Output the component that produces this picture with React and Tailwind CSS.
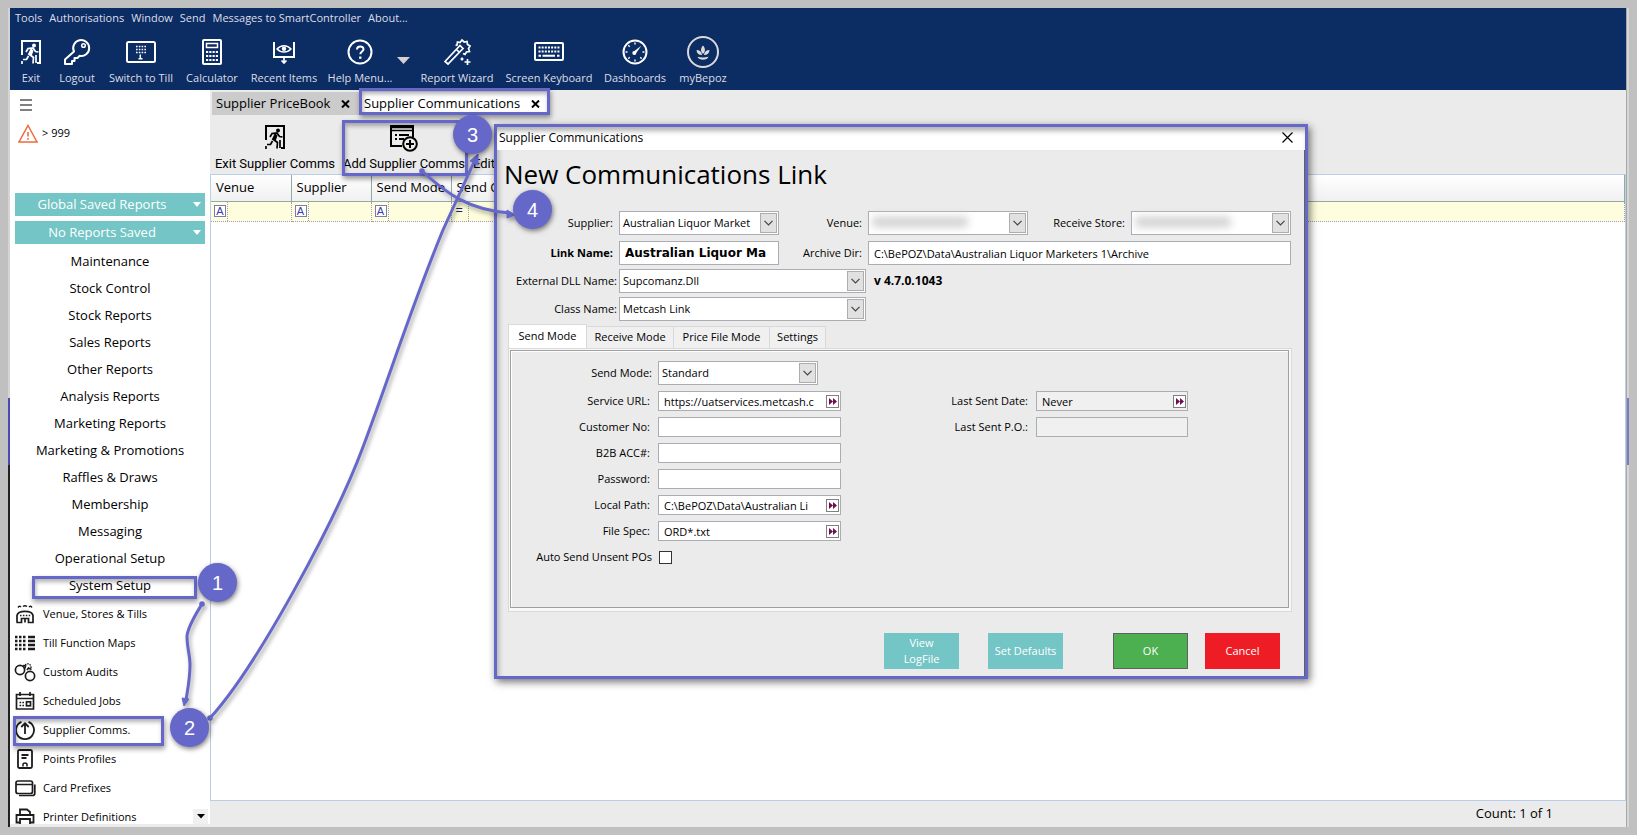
import React from "react";

const UI = "font-['Open_Sans','Noto_Sans',sans-serif]";

function Svg({ w = 26, h = 26, box = "0 0 26 26", sw = 2, children }) {
  return (
    <svg width={w} height={h} viewBox={box} fill="none" stroke="currentColor" strokeWidth={sw} aria-hidden="true" className="shrink-0">
      {children}
    </svg>
  );
}

const ExitIcon = () => (
  <Svg w={22} h={26} box="0 0 22 26">
    <path d="M2 16V2h18v22h-3" />
    <circle cx="14" cy="6.500" r="2" fill="currentColor" stroke="none" />
    <path d="M12 9l-3.500 7M6 13l2-3.500 5-.5 2.500 3.500 3 .5M9.500 15.500l4 3-.5 6M8.500 17l-2 3.500H3M2 22v3M16 16v8" strokeWidth="1.700" />
    <path d="M11.500 10l-2.500 6 2.500 1.500 2-6z" fill="currentColor" stroke="none" />
  </Svg>
);
const KeyIcon = () => (
  <Svg w={28} h={28} box="0 0 28 28">
    <path d="M11 13.500a8 8 0 1 1 5.500 4.300l-2 2.200h-3v3H9v3H2v-4.500z" strokeLinejoin="round" />
    <circle cx="20.500" cy="7.500" r="1.800" strokeWidth="1.500" />
  </Svg>
);
const TillIcon = () => (
  <Svg w={30} h={22} box="0 0 30 22">
    <rect x="1" y="1" width="28" height="20" rx="1.500" />
    <path d="M10 5.500h10M10 8.500h10M10 11.500h10" strokeDasharray="1.600 1.200" strokeWidth="1.600" />
    <path d="M14.300 13.500v4M12.500 17.800h4" strokeWidth="1.500" />
  </Svg>
);
const CalcIcon = () => (
  <Svg w={22} h={26} box="0 0 22 26">
    <rect x="2" y="1" width="18" height="24" rx="1" />
    <rect x="5.500" y="4.500" width="11" height="4" strokeWidth="1.500" />
    <path d="M5 13h12M5 17h12M5 21h12" strokeDasharray="2.200 1.070" />
  </Svg>
);
const RecentIcon = () => (
  <Svg w={24} h={24} box="0 0 24 24">
    <path d="M2 2v15h20V2" />
    <path d="M5 9c4-4.500 10-4.500 14 0-4 4-10 4-14 0z" strokeWidth="1.500" />
    <circle cx="12" cy="8.800" r="2.200" fill="currentColor" stroke="none" />
    <path d="M12 17v6M9.500 20.500L12 23l2.500-2.500" strokeWidth="1.700" />
  </Svg>
);
const HelpIcon = () => (
  <Svg>
    <circle cx="13" cy="13" r="11.500" />
    <path d="M10 10.500c0-4 6.500-4 6.500-.3 0 2.300-3.200 2.300-3.200 5" />
    <path d="M13.300 17.500v2.300" strokeWidth="2.300" />
  </Svg>
);
const WandIcon = () => (
  <Svg w={28} h={28} box="0 0 28 28" sw={1.7}>
    <path d="M2 23.500L17 7.500l3 3L5 26z M13.500 11.500l3 3" />
    <path d="M12.500 7.500l1.500-.5.500-3 2.500.5 2-2.500 2.200 2 2.800-.5.500 3 2.500 1.500-1.500 2.500 1 3-3 .5-1.500 2.500-2-1" />
    <path d="M19 19.500v3M17.500 21h3M24.500 21v6M21.500 24h6" />
  </Svg>
);
const KeyboardIcon = () => (
  <Svg w={30} h={20} box="0 0 30 20">
    <rect x="1" y="1" width="28" height="17" rx="1" />
    <path d="M4.500 5.500h21M4.500 9.500h21" strokeDasharray="2 1.160" />
    <path d="M4.500 13.700h2.500M8.500 13.700h12.500M23 13.700h2.500" />
  </Svg>
);
const DashIcon = () => (
  <Svg>
    <circle cx="13" cy="13" r="11.500" />
    <path d="M13 3.500v2M13 20.500v2M3.500 13h2M20.500 13h2M6.300 6.300l1.400 1.400M6.300 19.700l1.400-1.400M19.700 19.700l-1.400-1.400" strokeWidth="1.400" />
    <path d="M10.800 13.200l8.500-6.500-6.200 8.800z" fill="currentColor" stroke="none" />
    <circle cx="12.300" cy="14" r="2" fill="currentColor" stroke="none" />
  </Svg>
);
const BepozIcon = () => (
  <Svg w={32} h={32} box="0 0 32 32">
    <g stroke="#dcdad8">
      <circle cx="16" cy="16" r="15" />
      <path d="M16 9.500c2.600 3 2.600 6 0 8.500-2.600-2.500-2.600-5.500 0-8.500zM9.500 14c3.200 0 5 1.700 5.600 5-3.600 0-5.400-1.800-5.600-5zM22.500 14c-3.200 0-5 1.700-5.600 5 3.600 0 5.400-1.800 5.600-5zM10.500 20.800c3.600.8 7.400.8 11 0-1 4-10 4-11 0z" fill="#dcdad8" stroke="none" />
    </g>
  </Svg>
);
const AddIcon = () => (
  <Svg w={30} h={28} box="0 0 30 28">
    <path d="M13 22H2V2h22v11" />
    <path d="M2 3.500h22M2 6.500h22" strokeWidth="1.500" />
    <path d="M6 11h2M6 15h2M10 11h10M10 15h5" strokeWidth="1.800" />
    <circle cx="21" cy="20" r="6.800" fill="#ebebeb" />
    <path d="M21 16v8M17 20h8" />
  </Svg>
);

const VenueIcon = () => (
  <Svg w={20} h={20} box="0 0 20 20" sw={1.7}>
    <path d="M2 18.500v-7c1-5.500 15-5.500 16 0v7h-4.500v-4h-7v4H1.500M10 14.500v4" />
    <path d="M5 11.500h10.500" strokeDasharray="1.500 1.400" />
    <path d="M3 3.500c1-1.500 2-1.500 3-.5M8 2.500c1.300-1 2.700-1 4 0M14 3c1-1 2-1 3 .5" strokeWidth="1.400" />
  </Svg>
);
const MapIcon = () => (
  <Svg w={20} h={20} box="0 0 20 20" sw={2.5}>
    <path d="M0 4h12M0 8h12M0 12h12M0 16h12" strokeDasharray="2.500 1.500" />
    <path d="M13 4h7M13 8h7M13 12h7M13 16h7" />
  </Svg>
);
const AuditIcon = () => (
  <Svg w={22} h={20} box="0 0 22 20" sw={1.7}>
    <circle cx="6" cy="8" r="4.600" />
    <circle cx="16" cy="14" r="4.600" />
    <path d="M9 3.500l2.500.5-1 3M13 8l1.500-2 3 1.500" />
    <path d="M11 3c3-2.500 6-1 6 3" strokeWidth="1.300" strokeDasharray="1.500 1" />
  </Svg>
);
const JobsIcon = () => (
  <Svg w={20} h={20} box="0 0 20 20" sw={1.7}>
    <path d="M1.500 3.500h17v14.500h-17zM1.500 7.500h17M5 1v4M15 1v4" />
    <path d="M4.500 11.500h4.500M4.500 14.500h4.500" strokeDasharray="1.700 1.200" />
    <rect x="11.500" y="10.800" width="4" height="4" />
  </Svg>
);
const CommsIcon = () => (
  <Svg w={20} h={20} box="0 0 20 20" sw={1.8}>
    <path d="M6.500 1.800a9 9 0 1 0 7 0" />
    <path d="M10 14V3.500M6.300 7L10 3.200 13.700 7" />
  </Svg>
);
const PointsIcon = () => (
  <Svg w={20} h={20} box="0 0 20 20" sw={1.8}>
    <rect x="3" y="1" width="14" height="18" rx="1.500" />
    <path d="M6.500 6h7M6.500 9h5" />
    <path d="M8 17.500v-2c0-2 4-2 4 0v2" strokeWidth="1.500" />
  </Svg>
);
const CardIcon = () => (
  <Svg w={21} h={20} box="0 0 21 20" sw={1.7}>
    <rect x="1" y="3" width="16.500" height="12.500" rx="2" />
    <path d="M1 6.500h16.500M4 17.500h13.500c1.500 0 2.300-.8 2.300-2.300V6.500" />
  </Svg>
);
const PrinterIcon = () => (
  <Svg w={20} h={20} box="0 0 20 20" sw={1.8}>
    <path d="M5 8V2.500h7l3 2.500V8M5 15.500H1.500V8h17v7.500H15" />
    <path d="M5 12h10v6.500H5z" />
  </Svg>
);

const toolbar = [
  ["Exit", ExitIcon, "w-[34px]"],
  ["Logout", KeyIcon, "w-[58px]"],
  ["Switch to Till", TillIcon, "w-[70px]"],
  ["Calculator", CalcIcon, "w-[72px]"],
  ["Recent Items", RecentIcon, "w-[72px]"],
  ["Help Menu...", HelpIcon, "w-20"],
  null,
  ["Report Wizard", WandIcon, "w-[94px]"],
  ["Screen Keyboard", KeyboardIcon, "w-[90px]"],
  ["Dashboards", DashIcon, "w-[82px]"],
  ["myBepoz", BepozIcon, "w-[54px]"],
];

const groups = [
  "Maintenance", "Stock Control", "Stock Reports", "Sales Reports", "Other Reports", "Analysis Reports",
  "Marketing Reports", "Marketing & Promotions", "Raffles & Draws", "Membership", "Messaging",
  "Operational Setup", "System Setup",
];

const setup = [
  ["Venue, Stores & Tills", VenueIcon],
  ["Till Function Maps", MapIcon],
  ["Custom Audits", AuditIcon],
  ["Scheduled Jobs", JobsIcon],
  ["Supplier Comms.", CommsIcon],
  ["Points Profiles", PointsIcon],
  ["Card Prefixes", CardIcon],
  ["Printer Definitions", PrinterIcon],
];

function Header() {
  return (
    <header className="bg-[#0c2c64] text-[#dcdfe6]">
      <nav className="flex h-5 items-center gap-[7px] pl-[5px] text-[11px] leading-4">
        {["Tools", "Authorisations", "Window", "Send", "Messages to SmartController", "About..."].map((t) => (
          <button key={t} type="button" className="whitespace-nowrap">{t}</button>
        ))}
      </nav>
      <div className="flex h-[62px] pt-0.5 pl-1">
        {toolbar.map((item, i) => {
          if (!item) {
            return (
              <button key={i} type="button" aria-label="More help" className="-ml-1 flex w-3.5 justify-center pt-[27px]">
                <svg width="13" height="7" viewBox="0 0 13 7" fill="#d8d0d0"><path d="M0 0h13L6.500 7z" /></svg>
              </button>
            );
          }
          const [label, Icon, width] = item;
          return (
            <button key={label} type="button" className={`flex flex-col items-center ${width}`}>
              <span className="flex h-11 items-center text-white"><Icon /></span>
              <span className="-mt-[3px] whitespace-nowrap text-[11px] leading-[14px]">{label}</span>
            </button>
          );
        })}
      </div>
    </header>
  );
}

function ReportButton({ children }) {
  return (
    <button type="button" className="flex h-[23px] items-center bg-[#74c5c5] text-[13px] text-white">
      <span className="flex-1 pr-1">{children}</span>
      <svg width="8" height="5" viewBox="0 0 8 5" fill="#fff" className="mr-1"><path d="M0 0h8L4 5z" /></svg>
    </button>
  );
}

function Sidebar() {
  return (
    <aside className="flex h-[734px] w-[200px] shrink-0 flex-col overflow-hidden bg-white text-black">
      <button type="button" aria-label="Menu" className="mt-[9px] ml-2.5 flex w-3 flex-col gap-0.5 self-start">
        <span className="h-0.5 bg-[#808080]" />
        <span className="mt-px h-0.5 bg-[#808080]" />
        <span className="mt-px h-0.5 bg-[#808080]" />
      </button>
      <div className="mt-[13px] ml-2 flex h-6 items-center gap-1 text-[11px]">
        <svg width="20" height="19" viewBox="0 0 20 19" fill="none" stroke="#ee6a3c" strokeWidth="1.500" aria-hidden="true">
          <path d="M10 1.500L19 18H1z" />
          <path d="M10 8v4.500M10 14v1.800" strokeWidth="1.600" />
        </svg>
        <span>&gt; 999</span>
      </div>
      <div className="mt-[50px] flex flex-col gap-[5px] px-[5px]">
        <ReportButton>Global Saved Reports</ReportButton>
        <ReportButton>No Reports Saved</ReportButton>
      </div>
      <ul className="mt-1">
        {groups.map((g) => (
          <li key={g}>
            <button type="button" className="block h-[27px] w-full text-center text-[13px] leading-[27px]">{g}</button>
          </li>
        ))}
      </ul>
      <div className="flex items-end">
        <ul className="flex-1">
          {setup.map(([label, Icon]) => (
            <li key={label}>
              <button type="button" className="flex h-[29px] w-full items-center pl-1 text-left text-[11px]">
                <span className="flex w-[22px] justify-center text-[#1c1c1c]"><Icon /></span>
                <span className="pl-[7px] leading-[14px] whitespace-nowrap">{label}</span>
              </button>
            </li>
          ))}
        </ul>
        <button type="button" aria-label="Scroll down" className="mr-0.5 mb-[7px] flex h-[15px] w-[15px] items-center justify-center bg-[#f0f0f0]">
          <svg width="8" height="5" viewBox="0 0 8 5"><path d="M0 0h8L4 4.500z" /></svg>
        </button>
      </div>
    </aside>
  );
}

function Cross() {
  return (
    <svg width="9" height="8" viewBox="0 0 9 8" stroke="#000" strokeWidth="2" aria-hidden="true"><path d="M1 .5l7 7M8 .5l-7 7" /></svg>
  );
}

function Tab({ children, active, width }) {
  return (
    <div className={`flex h-[23px] items-center justify-between text-[13px] ${width} ${active ? "bg-white pr-2 pl-[3px]" : "bg-[#cbcbcb] pr-[9px] pl-1"}`}>
      <button type="button" className="whitespace-nowrap">{children}</button>
      <button type="button" aria-label={`Close ${children}`}><Cross /></button>
    </div>
  );
}

const headCell = "h-[26px] border-r border-b border-[#93a9a6] bg-linear-to-b from-white to-[#f0f0f0] pl-[5px] text-left font-normal whitespace-nowrap overflow-hidden";

function FilterA() {
  return (
    <div className="flex h-[19px] w-[17px] items-center border-r border-dotted border-[#a0a0a0] pl-[3px]">
      <span className="flex h-3 w-3 items-center justify-center border border-[#7a7ab8] bg-white font-['Liberation_Sans',sans-serif] text-[11px] leading-3 text-[#3c3ca8]">A</span>
    </div>
  );
}

function Main() {
  return (
    <main className="flex min-w-0 flex-1 flex-col bg-[#ebebeb]">
      <div className="flex h-[25px] items-start gap-0.5 pt-0.5 pl-0.5">
        <Tab width="w-[147px]">Supplier PriceBook</Tab>
        <Tab width="w-[187px]" active>Supplier Communications</Tab>
      </div>
      <div className="flex h-[59px] pl-0.5 font-['Roboto',sans-serif] text-[13px]">
        <button type="button" className="flex w-[126px] flex-col items-center pt-[9px]">
          <ExitIcon />
          <span className="mt-1.5 leading-4 whitespace-nowrap">Exit Supplier Comms</span>
        </button>
        <button type="button" className="flex w-[132px] flex-col items-center pt-[9px]">
          <AddIcon />
          <span className="mt-1 leading-4 whitespace-nowrap">Add Supplier Comms</span>
        </button>
        <button type="button" className="flex flex-col pt-[41px] pl-[3px]">
          <span className="leading-4">Edit</span>
        </button>
      </div>
      <div className="flex-1 border border-[#b7cfe8] bg-white">
        <table className="w-full table-fixed border-collapse text-[13px]">
          <thead>
            <tr>
              <th className={`${headCell} w-20`}>Venue</th>
              <th className={`${headCell} w-20`}>Supplier</th>
              <th className={`${headCell} w-20`}>Send Mode</th>
              <th className={headCell}>Send C</th>
            </tr>
          </thead>
          <tbody>
            <tr className="bg-[#fefede]">
              {[0, 1, 2].map((k) => (
                <td key={k} className="h-5 border-r border-b border-dotted border-[#a0a0a0] p-0"><FilterA /></td>
              ))}
              <td className="h-5 border-r border-b border-dotted border-[#a0a0a0] p-0">
                <div className="flex h-[19px] w-[17px] items-center border-r border-dotted border-[#a0a0a0] pl-1 text-[#202060]">=</div>
              </td>
            </tr>
          </tbody>
        </table>
      </div>
      <footer className="flex h-[23px] items-start justify-end pt-1 pr-[73px] text-[13px] leading-4">Count: 1 of 1</footer>
    </main>
  );
}

function Select({ id, value, width, blurred }) {
  return (
    <span className={`relative flex h-6 shrink-0 ${width}`}>
      <select id={id} className="h-full w-full appearance-none border border-[#abadb3] bg-white pr-5 pl-[3px] text-[11px]">
        <option>{value}</option>
      </select>
      {blurred && <span className={`absolute top-1.5 left-1 h-2.5 rounded bg-[#cfcfcf] blur-[4px] ${blurred}`} />}
      <span className="pointer-events-none absolute top-0.5 right-0.5 flex h-5 w-[17px] items-center justify-center border border-[#adadad] bg-[#e1e1e1]">
        <svg width="9" height="6" viewBox="0 0 9 6" fill="none" stroke="#444" strokeWidth="1.200"><path d="M.5 .8l4 4 4-4" /></svg>
      </span>
    </span>
  );
}

function Input({ id, value = "", width, more, type = "text", tone = "bg-white" }) {
  return (
    <span className={`flex h-5 items-center border border-[#abadb3] pr-px ${tone} ${width}`}>
      <input id={id} type={type} defaultValue={value} className="h-full w-full min-w-0 flex-1 bg-transparent pl-[5px] text-[11px] outline-none" />
      {more && (
        <button type="button" aria-label="More" className="flex h-[13px] w-[13px] shrink-0 items-center justify-center border border-[#808080] bg-white">
          <svg width="8" height="7" viewBox="0 0 8 7" fill="#6b1050"><path d="M0 0l4 3.500L0 7zM4 0l4 3.500L4 7z" /></svg>
        </button>
      )}
    </span>
  );
}

function Label({ htmlFor, width, children, bold, pad = "pr-1.5" }) {
  return (
    <label htmlFor={htmlFor} className={`shrink-0 text-right whitespace-nowrap ${width} ${pad} ${bold ? "font-bold" : ""}`}>{children}</label>
  );
}

const sendFields = [
  ["url", "Service URL:", "https://uatservices.metcash.c", true],
  ["cust", "Customer No:", "", false],
  ["b2b", "B2B ACC#:", "", false],
  ["pwd", "Password:", "", false],
  ["path", "Local Path:", "C:\\BePOZ\\Data\\Australian Li", true],
  ["spec", "File Spec:", "ORD*.txt", true],
];

function Dialog() {
  return (
    <section aria-label="Supplier Communications dialog" className="absolute top-[124px] left-[494px] flex w-[814px] flex-col border-3 border-[#6568c9] bg-[#ebebeb] text-[12px] shadow-[2px_3px_8px_rgba(0,0,0,0.55)]">
      <div className="flex h-[23px] items-center justify-between bg-white pr-3 pb-0.5 pl-0.5 shadow-[inset_0_6px_5px_-2px_rgba(0,0,0,0.3)]">
        <h2>Supplier Communications</h2>
        <button type="button" aria-label="Close">
          <svg width="11" height="11" viewBox="0 0 11 11" stroke="#000" strokeWidth="1.200"><path d="M.5 .5l10 10M10.500 .5l-10 10" /></svg>
        </button>
      </div>
      <div className="flex flex-col border-r border-[#606060] pb-[7px] shadow-[inset_6px_0_5px_-4px_rgba(0,0,0,0.25)]">
        <h1 className="h-[61px] pl-[7px] text-[26px] leading-[48px]">New Communications Link</h1>
        <form className="flex flex-col text-[11px]" onSubmit={(e) => e.preventDefault()}>
          <div className="flex h-6 items-center">
            <Label htmlFor="supplier" width="w-[122px]">Supplier:</Label>
            <Select id="supplier" value="Australian Liquor Market" width="w-40" />
            <Label htmlFor="venue" width="w-[89px]">Venue:</Label>
            <Select id="venue" value="" width="w-40" blurred="w-24" />
            <Label htmlFor="store" width="w-[103px]">Receive Store:</Label>
            <Select id="store" value="" width="w-40" blurred="w-24" />
          </div>
          <div className="mt-1.5 flex h-6 items-center">
            <Label htmlFor="link" width="w-[122px]" bold>Link Name:</Label>
            <input id="link" defaultValue="Australian Liquor Ma" className="h-6 w-40 border border-[#abadb3] bg-white pl-[5px] font-['DejaVu_Sans',sans-serif] text-[12px] font-bold" />
            <Label htmlFor="archive" width="w-[89px]">Archive Dir:</Label>
            <input id="archive" defaultValue="C:\BePOZ\Data\Australian Liquor Marketers 1\Archive" className="h-6 w-[423px] border border-[#abadb3] bg-white pl-[5px]" />
          </div>
          <div className="mt-1 flex h-6 items-center">
            <Label htmlFor="dll" width="w-[122px]" pad="pr-0.5">External DLL Name:</Label>
            <Select id="dll" value="Supcomanz.Dll" width="w-[247px]" />
            <span className="pl-2 text-[12px] font-bold">v 4.7.0.1043</span>
          </div>
          <div className="mt-1 flex h-6 items-center">
            <Label htmlFor="cls" width="w-[122px]" pad="pr-0.5">Class Name:</Label>
            <Select id="cls" value="Metcash Link" width="w-[247px]" />
          </div>
          <div className="mt-[3px] ml-[11px] flex h-6 items-end" role="tablist">
            <button type="button" role="tab" aria-selected="true" className="h-6 w-[79px] border border-b-0 border-[#d9d9d9] bg-white">Send Mode</button>
            {[["Receive Mode", "w-[87px]"], ["Price File Mode", "w-24"], ["Settings", "w-14"]].map(([t, w]) => (
              <button key={t} type="button" role="tab" aria-selected="false" className={`h-[22px] border border-b-0 border-l-0 border-[#d9d9d9] bg-[#f0f0f0] whitespace-nowrap ${w}`}>{t}</button>
            ))}
          </div>
          <div className="mr-3 ml-[11px] border border-[#d9d9d9] bg-[#f8f8f8] pt-px pr-0.5 pb-[3px] pl-px">
            <div className="flex h-[258px] items-start border border-[#a0a0a0] bg-[#ebebeb] pt-2.5 shadow-[inset_1px_1px_0_#fff]">
              <div className="flex flex-col gap-1.5">
                <div className="flex h-6 items-center">
                  <Label htmlFor="mode" width="w-[147px]">Send Mode:</Label>
                  <Select id="mode" value="Standard" width="w-40" />
                </div>
                {sendFields.map(([id, label, value, more]) => (
                  <div key={id} className="flex h-5 items-center">
                    <Label htmlFor={id} width="w-[147px]" pad="pr-2">{label}</Label>
                    <Input id={id} value={value} more={more} type={id === "pwd" ? "password" : "text"} width="w-[183px]" />
                  </div>
                ))}
                <div className="flex h-5 items-center">
                  <Label htmlFor="auto" width="w-[147px]">Auto Send Unsent POs</Label>
                  <input id="auto" type="checkbox" className="ml-px h-[13px] w-[13px] appearance-none border border-[#333] bg-white" />
                </div>
              </div>
              <div className="mt-[30px] flex flex-col gap-1.5">
                {[["date", "Last Sent Date:", "Never", true], ["po", "Last Sent P.O.:", "", false]].map(([id, label, value, more]) => (
                  <div key={id} className="flex h-5 items-center">
                    <Label htmlFor={id} width="w-[195px]" pad="pr-2">{label}</Label>
                    <Input id={id} value={value} more={more} width="w-[152px]" tone="bg-[#f0f0f0]" />
                  </div>
                ))}
              </div>
            </div>
          </div>
          <div className="mt-[21px] flex justify-end pr-6 text-white">
            <button type="button" className="h-9 w-[75px] bg-[#74c5c5] px-3 leading-4">View LogFile</button>
            <button type="button" className="ml-[29px] h-9 w-[75px] bg-[#74c5c5] whitespace-nowrap">Set Defaults</button>
            <button type="submit" className="ml-[50px] h-9 w-[75px] border border-[#606060] bg-[#4caf50]">OK</button>
            <button type="button" className="ml-[17px] h-9 w-[75px] bg-[#ee1c25]">Cancel</button>
          </div>
        </form>
      </div>
    </section>
  );
}

function Frame({ place }) {
  return <div className={`absolute border-3 border-[#6568c9] shadow-[1px_3px_5px_rgba(0,0,0,0.4),inset_1px_3px_4px_rgba(0,0,0,0.3)] ${place}`} />;
}

function Step({ n, place }) {
  return (
    <div className={`absolute flex h-[39px] w-[39px] items-center justify-center rounded-full bg-[#6568c9] font-['Liberation_Sans',sans-serif] text-[20px] text-white shadow-[1px_2px_5px_rgba(0,0,0,0.5)] ${place}`}>{n}</div>
  );
}

function Annotations() {
  return (
    <div className="pointer-events-none absolute inset-0">
      <Frame place="top-[88px] left-[359px] h-[27px] w-[191px]" />
      <Frame place="top-[120px] left-[342px] h-[56px] w-[126px]" />
      <Frame place="top-[576px] left-[32px] h-[23px] w-[165px]" />
      <Frame place="top-[716px] left-[13px] h-[30px] w-[151px]" />
      <svg className="absolute inset-0 h-full w-full drop-shadow-[2px_3px_2px_rgba(0,0,0,0.35)]" fill="none" stroke="#6568c9" strokeWidth="3" aria-hidden="true">
        <path d="M202 604C196 614 188 626 187 636C187 648 190 655 190 665C190 678 188 688 186 700" />
        <circle cx="202" cy="604" r="2.800" fill="#6568c9" stroke="none" />
        <path d="M182 698l7 1-5 7z" fill="#6568c9" strokeWidth="1" />
        <path d="M210 718C256 668 335 522 363 447C391 372 412 305 443 230L474 162" />
        <circle cx="210" cy="718" r="2.800" fill="#6568c9" stroke="none" />
        <path d="M478 154l-8 7 8 4z" fill="#6568c9" strokeWidth="1" />
        <path d="M422 171C446 193 468 210 510 213" />
        <circle cx="422" cy="171" r="2.800" fill="#6568c9" stroke="none" />
        <path d="M515 215l-8-5v8z" fill="#6568c9" strokeWidth="1" />
      </svg>
      <Step n="1" place="top-[563px] left-[198px]" />
      <Step n="2" place="top-[708px] left-[170px]" />
      <Step n="3" place="top-[115px] left-[453px]" />
      <Step n="4" place="top-[190px] left-[513px]" />
    </div>
  );
}

export default function App() {
  return (
    <div className={`relative flex min-h-screen items-start bg-[#c0c0c0] p-2 text-black ${UI}`}>
      <div className="flex w-0.5 shrink-0 flex-col self-stretch">
        <div className="h-[390px] bg-[#d4d4d4]" />
        <div className="h-[67px] bg-[#4a4ab4]" />
        <div className="flex-1 bg-[#222]" />
      </div>
      <div className="flex min-w-0 flex-1 flex-col">
        <Header />
        <div className="flex">
          <Sidebar />
          <Main />
        </div>
        <div className="h-[3px] bg-[#ebebeb]" />
      </div>
      <div className="flex w-[3px] shrink-0 flex-col self-stretch border-l border-[#a8a8a8] bg-[#d6d6d6]">
        <div className="mt-[390px] h-[67px] bg-[#7a7ac4]" />
      </div>
      <Dialog />
      <Annotations />
    </div>
  );
}
